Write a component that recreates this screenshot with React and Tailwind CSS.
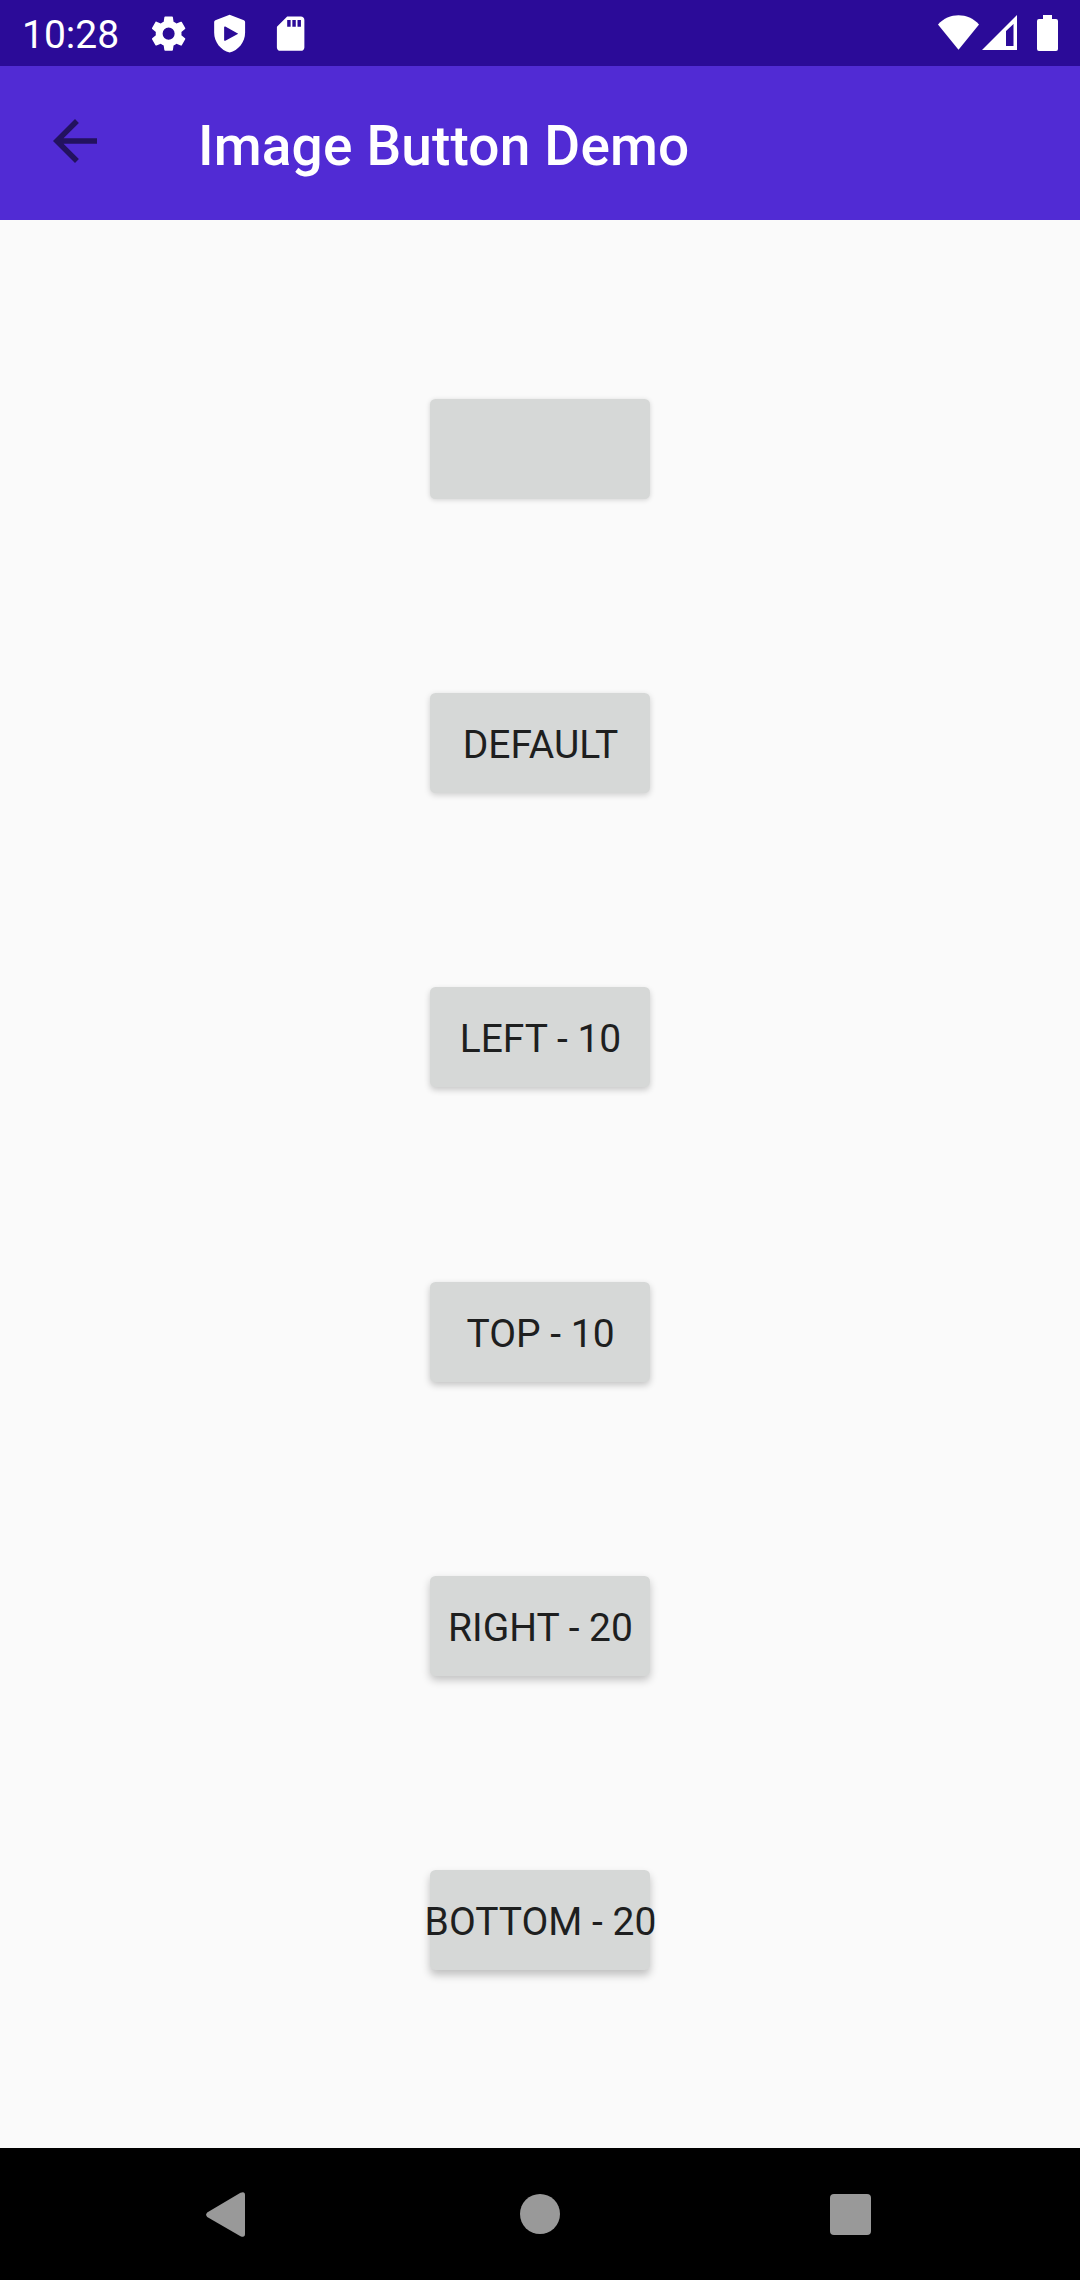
const buttons = [
  { label: "", shadow: "shadow-[0_1px_5px_rgba(0,0,0,0.16)]" },
  { label: "DEFAULT", shadow: "shadow-[0_2px_6px_rgba(0,0,0,0.18)]" },
  { label: "LEFT - 10", shadow: "shadow-[0_3px_6px_rgba(0,0,0,0.2)]" },
  { label: "TOP - 10", shadow: "shadow-[0_3px_7px_rgba(0,0,0,0.22)]" },
  { label: "RIGHT - 20", shadow: "shadow-[0_4px_8px_rgba(0,0,0,0.23)]" },
  { label: "BOTTOM - 20", shadow: "shadow-[0_5px_8px_rgba(0,0,0,0.24)]" },
];

function StatusBar() {
  return (
    <header className="flex h-[66px] items-start justify-between bg-[#2b0b98] text-white">
      <div className="flex pl-[22px]">
        <span className="mt-3 w-[126px] text-[39px] leading-[46px]">10:28</span>
        <svg className="mt-[13px] h-[41.25px] w-[41.25px]" viewBox="0 0 24 24" fill="currentColor">
          <path d="M19.43 12.98c.04-.32.07-.64.07-.98s-.03-.66-.07-.98l2.11-1.65c.19-.15.24-.42.12-.64l-2-3.46c-.12-.22-.39-.3-.61-.22l-2.49 1c-.52-.4-1.08-.73-1.69-.98l-.38-2.65A.49.49 0 0 0 14 2h-4c-.25 0-.46.18-.49.42l-.38 2.65c-.61.25-1.17.59-1.69.98l-2.49-1c-.23-.09-.49 0-.61.22l-2 3.46c-.13.22-.07.49.12.64l2.11 1.65c-.04.32-.07.65-.07.98s.03.66.07.98l-2.11 1.65c-.19.15-.24.42-.12.64l2 3.46c.12.22.39.3.61.22l2.49-1c.52.4 1.08.73 1.69.98l.38 2.65c.03.24.24.42.49.42h4c.25 0 .46-.18.49-.42l.38-2.65c.61-.25 1.17-.59 1.69-.98l2.49 1c.23.09.49 0 .61-.22l2-3.46c.12-.22.07-.49-.12-.64zM12 15.5a3.5 3.5 0 1 1 0-7 3.5 3.5 0 0 1 0 7" />
        </svg>
        <svg className="mt-[13px] ml-5 h-[41.25px] w-[41.25px]" viewBox="0 0 24 24" fill="currentColor">
          <path fillRule="evenodd" d="M12 1 20.300 4.200Q21 4.500 21 5.300V11.500C21 17 17 21.800 12 23 7 21.800 3 17 3 11.500V5.300Q3 4.500 3.700 4.200zM8.800 8.200V15.800Q8.900 16.300 9.500 16.100L17 12 9.500 7.900Q8.900 7.700 8.800 8.200" />
        </svg>
        <svg className="mt-[13px] ml-[19px] h-[41.25px] w-[41.25px]" viewBox="0 0 24 24" fill="currentColor">
          <path d="M18 2h-8L4.02 8 4 20c0 1.1.9 2 2 2h12c1.1 0 2-.9 2-2V4c0-1.1-.9-2-2-2m-6 6h-2V4h2zm3 0h-2V4h2zm3 0h-2V4h2z" />
        </svg>
      </div>
      <div className="flex pr-[22px] pt-[15px]">
        <svg className="h-[36px] w-[42px]" viewBox="0 0 42 36" fill="currentColor">
          <path d="M0 9.500C11-2.800 30-2.800 41 9.500L20.500 34.700z" />
        </svg>
        <svg className="ml-[2px] h-[36px] w-[35px]" viewBox="0 0 35 36" fill="currentColor">
          <path fillRule="evenodd" d="M35 0v35H0zM31.500 9 24 16v15h7.500z" />
        </svg>
        <svg className="ml-5 h-[36px] w-[21px]" viewBox="0 0 21 36" fill="currentColor">
          <path d="M6 0h9v4h4a2 2 0 0 1 2 2v28a2 2 0 0 1-2 2H2a2 2 0 0 1-2-2V6a2 2 0 0 1 2-2h4z" />
        </svg>
      </div>
    </header>
  );
}

function AppBar() {
  return (
    <div className="flex h-[154px] items-start bg-[#512bd4]">
      <svg className="mt-[42px] ml-[42px] h-[66px] w-[66px] text-[#23125f]" viewBox="0 0 24 24" fill="currentColor">
        <path d="M20 11H7.830l5.590-5.590L12 4l-8 8 8 8 1.410-1.410L7.830 13H20z" />
      </svg>
      <h1 className="mt-12 ml-[90px] text-[55px] leading-[64px] font-medium tracking-[0.16px] text-white">Image Button Demo</h1>
    </div>
  );
}

function NavBar() {
  return (
    <nav className="flex h-[132px] items-start bg-black text-[#999]">
      <svg className="mt-[44px] ml-[206px] h-[46px] w-[40px]" viewBox="0 0 40 46" fill="currentColor">
        <path d="M1.200 20.500 34.500 .8Q39 -1 39 3V42Q39 46 34.500 44.200L1.200 25Q-1 22.800 1.200 20.500" />
      </svg>
      <div className="mt-[46px] ml-[274px] size-10 rounded-full bg-[#999]" />
      <div className="mt-[46px] ml-[270px] size-[41px] rounded-[4px] bg-[#999]" />
    </nav>
  );
}

export default function App() {
  return (
    <div className="flex h-[2280px] w-[1080px] flex-col overflow-hidden bg-[#fafafa] font-['Roboto',sans-serif]">
      <StatusBar />
      <AppBar />
      <main className="flex flex-1 flex-col items-center gap-[194.2px] pt-[179px]">
        {buttons.map(({ label, shadow }) => (
          <button
            key={label}
            className={`flex h-[100px] w-[220px] shrink-0 items-center justify-center rounded-[5.5px] bg-[#d6d8d7] pt-[5px] pl-px text-[39px] leading-[45px] whitespace-nowrap text-[#1e1f1f] ${shadow}`}
          >
            {label}
          </button>
        ))}
      </main>
      <NavBar />
    </div>
  );
}
